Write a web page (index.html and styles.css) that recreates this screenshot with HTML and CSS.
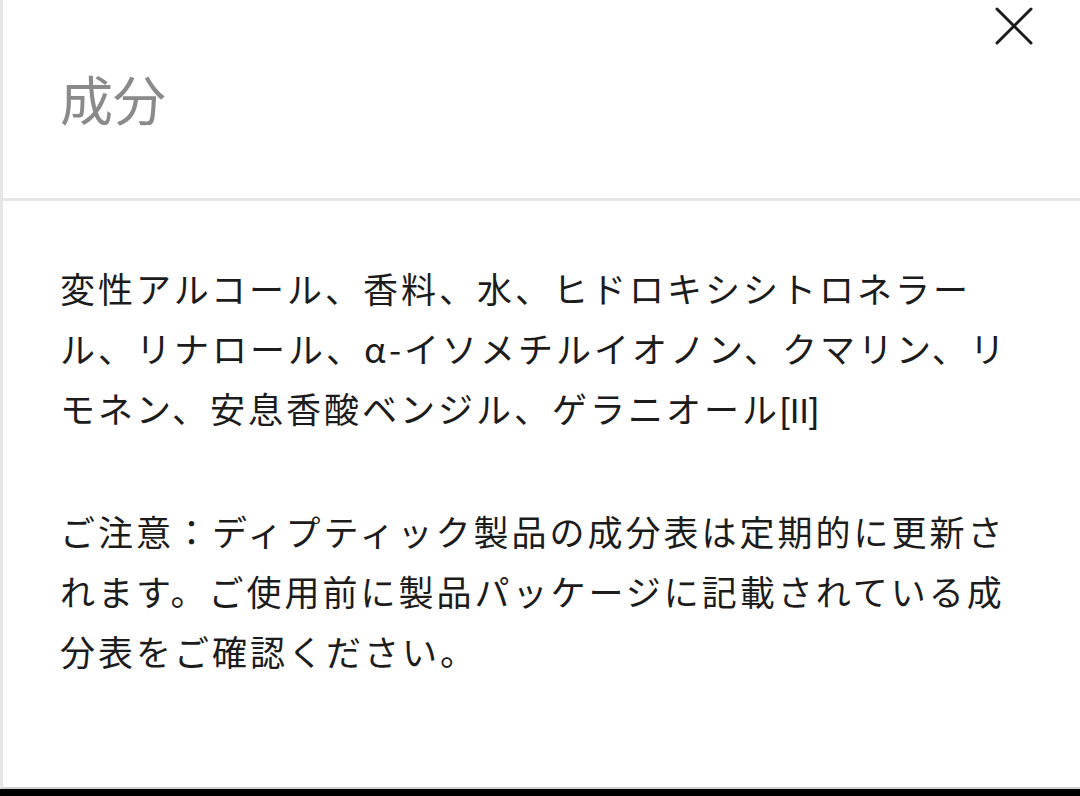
FILE: index.html
```html
<!DOCTYPE html>
<html lang="ja">
<head>
  <meta charset="UTF-8">
  <meta name="viewport" content="width=device-width, initial-scale=1">
  <title>成分</title>
  <link rel="stylesheet" href="styles.css">
</head>
<body>
  <div class="modal">
    <div class="modal-header">
      <h2 class="modal-title">成分</h2>
      <button class="close-btn" aria-label="閉じる">
        <svg width="40" height="40" viewBox="0 0 40 40">
          <path d="M3 3 L37 37 M37 3 L3 37" stroke="#1c1c1c" stroke-width="3" fill="none" stroke-linecap="round"/>
        </svg>
      </button>
    </div>

    <div class="modal-body">
      <p>変性アルコール、香料、水、ヒドロキシシトロネラール、リナロール、α-イソメチルイオノン、クマリン、リモネン、安息香酸ベンジル、ゲラニオール<span class="note-ref">[II]</span></p>
      <p>ご注意：ディプティック製品の成分表は定期的に更新されます。ご使用前に製品パッケージに記載されている成分表をご確認ください。</p>
    </div>
  </div>
  <div class="bottom-bar"></div>
</body>
</html>
```

FILE: styles.css
```css
html, body {
  height: 100%;
  margin: 0;
  padding: 0;
  overflow: hidden;
}

body {
  font-family: "Noto Sans CJK JP", "Noto Sans", sans-serif;
  background: #fff;
  display: flex;
  flex-direction: column;
}

.modal {
  flex: 1;
  border-left: 3px solid #e6e6e6;
  border-bottom: 2px solid #cfcfcf;
  display: flex;
  flex-direction: column;
}

.modal-header {
  height: 201px;
  box-sizing: border-box;
  border-bottom: 3px solid #e6e6e6;
  display: flex;
  justify-content: space-between;
  align-items: flex-start;
  padding: 6px 46px 0 57px;
}

.modal-title {
  margin: 62px 0 0;
  font-size: 53px;
  line-height: 60px;
  font-weight: 400;
  color: #8a8a8a;
}

.close-btn {
  background: none;
  border: none;
  padding: 0;
  width: 40px;
  height: 40px;
  cursor: pointer;
}

.modal-body {
  padding: 57px 62px 0 57px;
}

.modal-body p {
  margin: 0 0 60px;
  font-size: 35px;
  line-height: 60px;
  letter-spacing: 3px;
  color: #1c1c1c;
}

.note-ref {
  font-family: "Liberation Sans", sans-serif;
  letter-spacing: 0;
  line-height: 60px;
}

.bottom-bar {
  height: 7px;
  background: #000;
}
```
